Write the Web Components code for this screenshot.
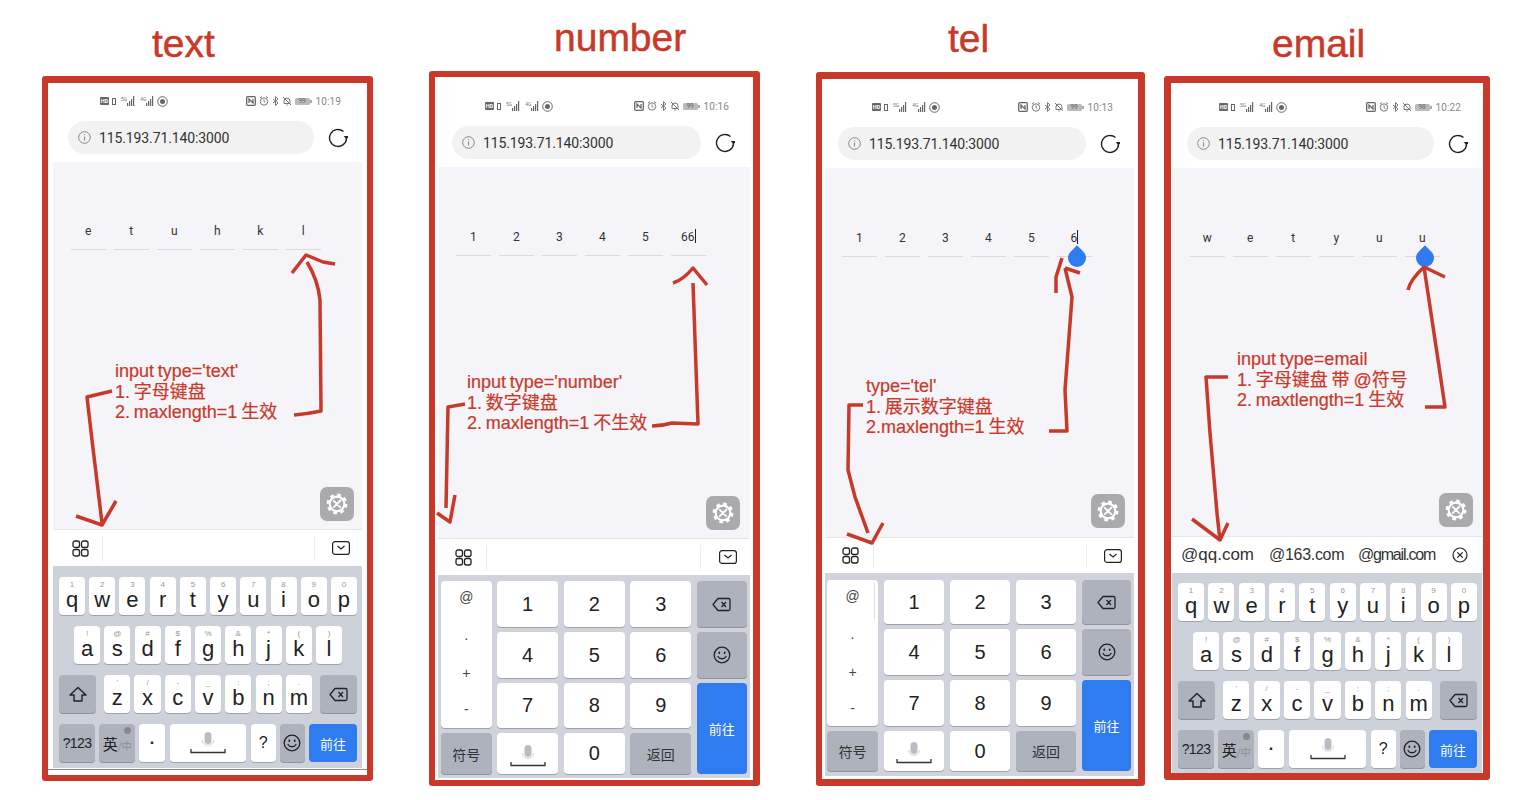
<!DOCTYPE html>
<html lang="zh">
<head>
<meta charset="utf-8">
<title>input type</title>
<style>
    html, body { margin: 0; background: #fff; }
    screenshot-board { --red: #c9392a; --sans: "Liberation Sans", "Noto Sans CJK SC", sans-serif; --ui: Roboto, "Noto Sans CJK SC", sans-serif; }
</style>
</head>
<body>
<screenshot-board>
    <board-title style="left:152px;top:22px">text</board-title>
    <board-title style="left:554px;top:16px">number</board-title>
    <board-title style="left:948px;top:17px">tel</board-title>
    <board-title style="left:1272px;top:22px">email</board-title>

    <phone-shot style="left:42px;top:76px;width:331px;height:705px;--bw:7px 6px 6px 6px;--inset:5px;--foot:7px;--foot-line:#8d8d8d;--head-top:8px;--url-x:15px;--url-w:246px">
        <phone-head time="10:19" battery="99"></phone-head>
        <phone-page style="--code-top:60px;--code-x:18px;--gear-r:8px;--gear-b:8px" values="e,t,u,h,k,l"></phone-page>
        <kb-toolbar></kb-toolbar>
        <letter-keyboard style="height:202px;--kb-top:11px"></letter-keyboard>
    </phone-shot>

    <phone-shot style="left:429px;top:71px;width:331px;height:715px;--bw:6px 7px 6px 6px;--inset:3px;--foot:2px;--head-top:19px;--url-x:14px;--url-w:249px">
        <phone-head time="10:16" battery="99"></phone-head>
        <phone-page style="--code-top:61px;--code-x:18px;--gear-r:10px;--gear-b:8px" values="1,2,3,4,5,66" caret></phone-page>
        <kb-toolbar style="--tool-l:49px;--tool-l-pad:3px;--tool-r:50px"></kb-toolbar>
        <number-keyboard style="height:203px;--kb-top:6px;--kb-x:3px;--kb-rows:46px 46px 45px 41px;--kb-cols:50.500px 61px 61px 61px 50px;--kb-gap:5.600px"></number-keyboard>
    </phone-shot>

    <phone-shot style="left:816px;top:72px;width:329px;height:714px;--bw:7px 7px 7px 6px;--inset:3px;--inset-r:4px;--foot:3px;--head-top:18px;--url-x:13px;--url-w:248px">
        <phone-head time="10:13" battery="99"></phone-head>
        <phone-page style="--code-top:61px;--code-x:17px;--gear-r:9px;--gear-b:9px" values="1,2,3,4,5,6" caret drop></phone-page>
        <kb-toolbar style="height:36px;--tool-l:49px;--tool-l-pad:3px"></kb-toolbar>
        <number-keyboard style="height:203px;--kb-top:7px;--kb-x:2px;--kb-rows:44px 46px 46px 40px;--kb-cols:51px 60px 60px 60px 49px;--kb-gap:6px" scrollbar></number-keyboard>
    </phone-shot>

    <phone-shot style="left:1164px;top:76px;width:326px;height:704px;--bw:7px 7px 7px 7px;--inset:1px;--foot:0px;--head-top:14px;--url-x:15px;--url-w:247px">
        <phone-head time="10:22" battery="98"></phone-head>
        <phone-page style="--code-top:61px;--code-x:18px;--gear-r:9px;--gear-b:9px" values="w,e,t,y,u,u" drop></phone-page>
        <mail-toolbar></mail-toolbar>
        <letter-keyboard style="height:200px;--kb-top:10px"></letter-keyboard>
    </phone-shot>

    <hand-arrows></hand-arrows>

    <hand-note style="left:115px;top:361px">input type='text'<br>1. 字母键盘<br>2. maxlength=1 生效</hand-note>
    <hand-note style="left:467px;top:372px">input type='number'<br>1. 数字键盘<br>2. maxlength=1 不生效</hand-note>
    <hand-note style="left:866px;top:376px">type='tel'<br>1. 展示数字键盘<br>2.maxlength=1 生效</hand-note>
    <hand-note style="left:1237px;top:349px">input type=email<br>1. 字母键盘 带 @符号<br>2. maxtlength=1 生效</hand-note>
</screenshot-board>

<script>
// Icons shared by the keyboards and bars
const ICONS = {
    backspace: `<svg width="19" height="15" viewBox="0 0 19 15" fill="none" stroke="#222" stroke-width="1.3" stroke-linejoin="round"><path d="M6 1.5h10.5a1.5 1.5 0 0 1 1.5 1.5v9a1.5 1.5 0 0 1-1.5 1.5H6L1 7.500z"/><path d="M9.500 5l4.500 5M14 5l-4.500 5"/></svg>`,
    shift: `<svg width="18" height="17" viewBox="0 0 18 17" fill="none" stroke="#222" stroke-width="1.4" stroke-linejoin="round"><path d="M9 1.500L17 9h-4v6H5V9H1z"/></svg>`,
    smile: `<svg width="18" height="18" viewBox="0 0 18 18" fill="none" stroke="#222" stroke-width="1.3" stroke-linecap="round"><circle cx="9" cy="9" r="7.800"/><path d="M5 10.500c1.500 3 6.500 3 8 0"/><path d="M6.300 6.500v.6M11.700 6.500v.6" stroke-width="1.800"/></svg>`,
    mic: `<svg width="36" height="22" viewBox="0 0 36 22" fill="none"><rect x="14.500" y="0" width="7" height="12" rx="3.500" fill="#b9bcc2"/><path d="M12.500 8c0 7 11 7 11 0" stroke="#cfd1d6"/><path d="M1 17v3.500h34V17" stroke="#333" stroke-width="1.300"/></svg>`,
    grid: `<svg width="17" height="17" viewBox="0 0 17 17" fill="none" stroke="#222" stroke-width="1.300"><rect x="1" y="1" width="6.500" height="6.500" rx="2"/><rect x="9.500" y="1" width="6.500" height="6.500" rx="2"/><rect x="1" y="9.500" width="6.500" height="6.500" rx="2"/><rect x="9.500" y="9.500" width="6.500" height="6.500" rx="2"/></svg>`,
    hide: `<svg width="18" height="14" viewBox="0 0 18 14" fill="none" stroke="#222" stroke-width="1.200"><rect x=".6" y=".6" width="16.800" height="12.800" rx="2.500"/><path d="M5.500 5l3.500 3 3.500-3"/></svg>`,
    close: `<svg width="16" height="16" viewBox="0 0 16 16" fill="none" stroke="#222" stroke-width="1.200"><circle cx="8" cy="8" r="7"/><path d="M5.300 5.300l5.400 5.400M10.700 5.300l-5.400 5.400"/></svg>`,
    info: `<svg width="13" height="13" viewBox="0 0 13 13" fill="none" stroke="#888" stroke-width="1"><circle cx="6.500" cy="6.500" r="5.800"/><path d="M6.500 5.500v4M6.500 3.300v1" stroke-width="1.100"/></svg>`,
    refresh: `<svg width="20" height="20" viewBox="0 0 20 20" fill="none" stroke="#222" stroke-width="1.400"><path d="M15.500 3.500A8.500 8.500 0 1 0 18.500 10.500"/><path d="M15.800 8h5l-2.400 3.500z" fill="#222" stroke="none"/></svg>`,
    gear: `<svg width="22" height="22" viewBox="0 0 24 24" fill="none" stroke="#fff"><circle cx="12" cy="12" r="8" stroke-width="2.400"/><circle cx="12" cy="12" r="10" stroke-width="2.800" stroke-dasharray="4 3.850"/><path d="M8.500 8.500l7 7M15.800 8.200l-7.300 7.300" stroke-width="2" stroke-linecap="round"/></svg>`
};

class ScreenshotBoard extends HTMLElement {
    constructor() {
        super();
        this.attachShadow({ mode: 'open' });
        this.shadowRoot.innerHTML = `
            <style>
                :host { display: block; position: relative; width: 1518px; height: 800px; overflow: hidden; background: #fff; }
            </style>
            <slot></slot>
        `;
    }
}

class BoardTitle extends HTMLElement {
    constructor() {
        super();
        this.attachShadow({ mode: 'open' });
        this.shadowRoot.innerHTML = `
            <style>
                :host { display: block; position: absolute; font: 39px/44px var(--sans); color: var(--red); -webkit-text-stroke: .5px var(--red); white-space: nowrap; }
            </style>
            <slot></slot>
        `;
    }
}

class HandNote extends HTMLElement {
    constructor() {
        super();
        this.attachShadow({ mode: 'open' });
        this.shadowRoot.innerHTML = `
            <style>
                :host { display: block; position: absolute; font: 18px/20.700px var(--sans); word-spacing: -1.200px; color: var(--red); -webkit-text-stroke: .2px var(--red); white-space: nowrap; }
            </style>
            <slot></slot>
        `;
    }
}

class PhoneShot extends HTMLElement {
    constructor() {
        super();
        this.attachShadow({ mode: 'open' });
        this.shadowRoot.innerHTML = `
            <style>
                :host {
                    display: flex;
                    flex-direction: column;
                    position: absolute;
                    box-sizing: border-box;
                    border: solid var(--red);
                    border-width: var(--bw);
                    border-radius: 3px;
                    padding: 0 var(--inset-r, var(--inset)) 0 var(--inset);
                    background: #fff;
                }
                .foot { flex: 0 0 var(--foot); position: relative; }
                .foot::before {
                    content: '';
                    position: absolute;
                    left: calc(0px - var(--inset));
                    right: calc(0px - var(--inset));
                    top: 1px;
                    height: 1px;
                    background: var(--foot-line, transparent);
                }
            </style>
            <slot></slot>
            <div class="foot"></div>
        `;
    }
}

class PhoneHead extends HTMLElement {
    constructor() {
        super();
        this.attachShadow({ mode: 'open' });
    }

    connectedCallback() {
        const bars = `<svg width="11" height="10" viewBox="0 0 11 10" fill="#666"><rect x="3" y="7" width="1.200" height="3"/><rect x="5" y="5" width="1.200" height="5"/><rect x="7" y="3" width="1.200" height="7"/><rect x="9" y="0" width="1.200" height="10"/></svg>`;
        this.shadowRoot.innerHTML = `
            <style>
                :host { display: block; flex: 0 0 auto; background: #fff; padding-top: var(--head-top); padding-bottom: 8px; font-family: var(--ui); }
                .status { display: flex; align-items: center; justify-content: space-between; height: 20px; padding: 0 21px 0 47px; color: #777; }
                .group { display: flex; align-items: center; gap: 3px; }
                .hd { background: #666; color: #fff; font: bold 5.500px/8px var(--ui); width: 9px; text-align: center; border-radius: 1px; }
                .net { display: flex; align-items: flex-start; font-size: 5px; line-height: 6px; margin-left: 2px; }
                .net svg { margin-left: -3px; }
                .batt { position: relative; width: 15px; height: 7px; background: #bbb; border-radius: 1.500px; font-size: 6.500px; line-height: 7px; text-align: center; color: #666; margin-right: 2px; }
                .batt::after { content: ''; position: absolute; right: -2px; top: 2px; width: 1.500px; height: 3px; background: #aaa; }
                .time { font-size: 10px; letter-spacing: .1px; color: #888; margin-left: 1px; }
                .url-row { display: flex; align-items: center; gap: 14px; height: 33px; margin-top: 10px; padding-left: var(--url-x); }
                .url { display: flex; align-items: center; gap: 8px; box-sizing: border-box; width: var(--url-w); height: 33px; padding-left: 10px; border-radius: 17px; background: #f2f2f2; font-size: 14px; letter-spacing: -.12px; color: #333; }
            </style>
            <div class="status">
                <div class="group">
                    <span class="hd">HD</span>
                    <svg width="4" height="7" viewBox="0 0 4 7"><rect x=".5" y=".5" width="3" height="6" fill="none" stroke="#666"/></svg>
                    <span class="net">5G${bars}</span>
                    <span class="net">4G${bars}</span>
                    <svg width="11" height="11" viewBox="0 0 11 11" fill="none" stroke="#666"><circle cx="5.500" cy="5.500" r="4.800"/><circle cx="5.500" cy="5.500" r="2.500" fill="#666" stroke="none"/></svg>
                </div>
                <div class="group">
                    <svg width="10" height="10" viewBox="0 0 10 10" fill="none" stroke="#666" stroke-width="1.300"><rect x=".7" y=".7" width="8.600" height="8.600" rx="1"/><path d="M3 7V3l4 4V3"/></svg>
                    <svg width="10" height="10" viewBox="0 0 10 10" fill="none" stroke="#777"><circle cx="5" cy="5.500" r="3.700"/><path d="M5 3.500v2l1.300 1M1 2l2-1.500M9 2L7 .5"/></svg>
                    <svg width="7" height="10" viewBox="0 0 7 10" fill="none" stroke="#777"><path d="M1 3l5 4-2.500 2.500v-9L6 3 1 7"/></svg>
                    <svg width="10" height="10" viewBox="0 0 10 10" fill="none" stroke="#777"><path d="M2 7.500V5a3 3 0 0 1 6 0v2.500zM4.300 9h1.400M1 1l8 8"/></svg>
                    <span class="batt">${this.getAttribute('battery')}</span>
                    <span class="time">${this.getAttribute('time')}</span>
                </div>
            </div>
            <div class="url-row">
                <div class="url">${ICONS.info}<span>115.193.71.140:3000</span></div>
                ${ICONS.refresh}
            </div>
        `;
    }
}

class PhonePage extends HTMLElement {
    constructor() {
        super();
        this.attachShadow({ mode: 'open' });
    }

    connectedCallback() {
        const values = this.getAttribute('values').split(',');
        const cells = values.map((v, i) => {
            const last = i === values.length - 1;
            const caret = last && this.hasAttribute('caret') ? '<i class="caret"></i>' : '';
            const drop = last && this.hasAttribute('drop') ? '<b class="drop"></b>' : '';
            return `<div class="cell"><span>${v}${caret}</span>${drop}</div>`;
        }).join('');
        this.shadowRoot.innerHTML = `
            <style>
                :host { display: block; position: relative; flex: 1 1 0; min-height: 0; background: #f4f4f9; padding: var(--code-top) 0 0 var(--code-x); font-family: var(--ui); }
                .code { display: grid; grid-template-columns: repeat(6, 34.500px); column-gap: 8.500px; }
                .cell { position: relative; height: 27px; border-bottom: 1px solid #d9d9df; text-align: center; font-size: 12px; line-height: 18px; color: #333; }
                .caret { display: inline-block; width: 1px; height: 14px; margin-left: 0; vertical-align: -2px; background: #222; }
                .drop { position: absolute; left: 11px; top: 20px; width: 18px; height: 18px; background: #2f7bf0; border-radius: 50% 0 50% 50%; transform: rotate(-45deg); }
                .fab { position: absolute; right: var(--gear-r); bottom: var(--gear-b); display: flex; align-items: center; justify-content: center; width: 34px; height: 34px; border-radius: 7px; background: #a9a9ae; }
            </style>
            <div class="code">${cells}</div>
            <div class="fab">${ICONS.gear}</div>
        `;
    }
}

class KbToolbar extends HTMLElement {
    constructor() {
        super();
        this.attachShadow({ mode: 'open' });
        this.shadowRoot.innerHTML = `
            <style>
                :host { display: flex; flex: 0 0 auto; box-sizing: border-box; height: 37px; border-top: 1px solid #e6e6ea; background: #fff; align-items: center; justify-content: space-between; }
                div { display: flex; align-items: center; justify-content: center; height: 25px; box-sizing: border-box; }
                .left { width: var(--tool-l, 50px); border-right: 1px solid #e8e8e8; padding-left: var(--tool-l-pad, 5px); }
                .right { width: var(--tool-r, 48px); border-left: 1px solid #efefef; padding-left: 4px; }
            </style>
            <div class="left">${ICONS.grid}</div>
            <div class="right">${ICONS.hide}</div>
        `;
    }
}

class MailToolbar extends HTMLElement {
    constructor() {
        super();
        this.attachShadow({ mode: 'open' });
        this.shadowRoot.innerHTML = `
            <style>
                :host { display: flex; flex: 0 0 auto; box-sizing: border-box; height: 37px; border-top: 1px solid #e6e6ea; background: #fff; align-items: center; padding-left: 9px; font: 17px var(--sans); color: #333; white-space: nowrap; }
                .qq { width: 88px; }
                .n163 { width: 89px; font-size: 16px; letter-spacing: -.3px; }
                .gmail { width: 94px; font-size: 16px; letter-spacing: -1.200px; }
            </style>
            <span class="qq">@qq.com</span><span class="n163">@163.com</span><span class="gmail">@gmail.com</span>${ICONS.close}
        `;
    }
}

class KeyCap extends HTMLElement {
    constructor() {
        super();
        this.attachShadow({ mode: 'open' });
    }

    connectedCallback() {
        const sup = this.getAttribute('sup');
        this.shadowRoot.innerHTML = `
            <style>
                :host { display: flex; flex-direction: column; align-items: center; justify-content: center; box-sizing: border-box; min-width: 0; position: relative; border-radius: 4px; background: #fff; box-shadow: 0 1px 0 #9ea3ae; color: #222; font: 20px var(--sans); }
                :host([kind="fn"]) { background: #adb2bd; box-shadow: 0 1px 0 #8f94a0; }
                :host([kind="go"]) { background: #2f7bf0; box-shadow: none; color: #fff; font-size: 13px; font-family: "Noto Sans CJK SC", sans-serif; }
                :host([sup]) { justify-content: flex-start; padding-top: 3px; font-size: 22px; }
                .sup { font: 8px/10px var(--sans); color: #999; }
                .label { line-height: 22px; margin-top: -1px; }
            </style>
            ${sup !== null
                ? `<span class="sup">${sup}</span><span class="label"><slot></slot></span>`
                : '<slot></slot>'}
        `;
    }
}

class LetterKeyboard extends HTMLElement {
    constructor() {
        super();
        this.attachShadow({ mode: 'open' });
    }

    connectedCallback() {
        const keys = (letters, sups) => [...letters].map((l, i) => `<key-cap sup="${sups[i]}">${l}</key-cap>`).join('');
        this.shadowRoot.innerHTML = `
            <style>
                :host { display: flex; flex: 0 0 auto; flex-direction: column; gap: 11px; box-sizing: border-box; padding: var(--kb-top) 5px 0 6px; background: #cdd1da; }
                .row { display: flex; gap: 4.200px; height: 38px; }
                .row key-cap { flex: 1 1 0; }
                .two { padding: 0 15px; }
                .three .mid { display: flex; flex: 1 1 0; gap: 4.200px; margin: 0 4px; }
                .three .mid key-cap { flex: 1 1 0; }
                .three > key-cap { flex: 0 0 37px; }
                .four key-cap { flex: 0 0 auto; }
                .four .space { flex: 1 1 0; justify-content: flex-end; padding-bottom: 8px; }
                .wide { width: 36px; }
                .dot { width: 26px; font-size: 16px; font-weight: bold; }
                .small { width: 25px; font-size: 16px; }
                .go { width: 48px; }
                .sym { font-size: 14px; letter-spacing: -.6px; }
                .globe { position: absolute; right: 4px; top: 3px; width: 7px; height: 7px; border-radius: 50%; background: #888; }
            </style>
            <div class="row">${keys('qwertyuiop', '1234567890')}</div>
            <div class="row two">${keys('asdfghjkl', '!@#$%&*()')}</div>
            <div class="row three">
                <key-cap kind="fn">${ICONS.shift}</key-cap>
                <div class="mid">${keys('zxcvbnm', "'/-_:;.")}</div>
                <key-cap kind="fn">${ICONS.backspace}</key-cap>
            </div>
            <div class="row four">
                <key-cap kind="fn" class="wide sym">?123</key-cap>
                <key-cap kind="fn" class="wide"><span style="font:15px 'Noto Sans CJK SC',sans-serif;white-space:nowrap">英<span style="font-size:10px;color:#8a8d94">/中</span></span><i class="globe"></i></key-cap>
                <key-cap class="dot">·</key-cap>
                <key-cap class="space">${ICONS.mic}</key-cap>
                <key-cap class="small">?</key-cap>
                <key-cap kind="fn" class="small">${ICONS.smile}</key-cap>
                <key-cap kind="go" class="go">前往</key-cap>
            </div>
        `;
    }
}

class NumberKeyboard extends HTMLElement {
    constructor() {
        super();
        this.attachShadow({ mode: 'open' });
    }

    connectedCallback() {
        const digit = (n) => `<key-cap class="num">${n}</key-cap>`;
        const bar = this.hasAttribute('scrollbar') ? '<i class="bar"></i>' : '';
        this.shadowRoot.innerHTML = `
            <style>
                :host { display: grid; flex: 0 0 auto; box-sizing: border-box; padding: var(--kb-top) 0 0 var(--kb-x); background: #d0d2dc; grid-template-columns: var(--kb-cols); grid-template-rows: var(--kb-rows); column-gap: var(--kb-gap); row-gap: 5px; align-content: start; }
                .side { grid-row: 1 / span 3; font-size: 14px; color: #444; justify-content: flex-start; }
                .side span { display: block; height: 16px; line-height: 16px; }
                .side .a { margin-top: 8px; }
                .side .b { margin-top: 22px; }
                .side .c { margin-top: 22px; }
                .side .d { margin-top: 20px; }
                .go { grid-column: 5; grid-row: 3 / span 2; }
                .lab { font: 14px "Noto Sans CJK SC", sans-serif; color: #333; }
                .bar { position: absolute; right: 3px; top: 3px; width: 1px; height: 36px; background: #ddd; }
                .voice { justify-content: flex-end; padding-bottom: 7px; }
            </style>
            <key-cap class="side"><span class="a">@</span><span class="b">.</span><span class="c">+</span><span class="d">-</span>${bar}</key-cap>
            ${digit(1)}${digit(2)}${digit(3)}
            <key-cap kind="fn">${ICONS.backspace}</key-cap>
            ${digit(4)}${digit(5)}${digit(6)}
            <key-cap kind="fn">${ICONS.smile}</key-cap>
            ${digit(7)}${digit(8)}${digit(9)}
            <key-cap kind="go" class="go">前往</key-cap>
            <key-cap kind="fn" class="lab">符号</key-cap>
            <key-cap class="voice">${ICONS.mic}</key-cap>
            ${digit(0)}
            <key-cap kind="fn" class="lab">返回</key-cap>
        `;
    }
}

// Hand drawn arrows, in board coordinates
class HandArrows extends HTMLElement {
    constructor() {
        super();
        this.attachShadow({ mode: 'open' });
        this.shadowRoot.innerHTML = `
            <style>
                :host { display: block; position: absolute; left: 0; top: 0; width: 1518px; height: 800px; pointer-events: none; }
                svg { display: block; }
                path { fill: none; stroke: var(--red); stroke-width: 3.500; stroke-linejoin: round; stroke-linecap: butt; }
            </style>
            <svg width="1518" height="800" viewBox="0 0 1518 800">
                <path d="M294 415Q307 414 321 411L320 300Q318 280 307 262"/>
                <path d="M292 273L306 255L323 262L335 264"/>
                <path d="M112 391L87 397L92 440L102 523"/>
                <path d="M76 516L102 525L116 501"/>

                <path d="M652 426Q662 426 672 423L698 424L693 283"/>
                <path d="M673 283Q683 280 693 268L707 285"/>
                <path d="M465 404L448 407L446 508"/>
                <path d="M437 513L450 522L455 495"/>

                <path d="M1049 431H1067L1065 390L1072 297L1065 268"/>
                <path d="M1056 293V277L1062 258M1065 268L1080 273"/>
                <path d="M863 405H849L848 470L855 497L868 533"/>
                <path d="M847 534L872 543L883 523"/>

                <path d="M1425 407H1445L1437 353L1424 267"/>
                <path d="M1408 290Q1410 280 1424 267L1445 277"/>
                <path d="M1228 377H1206L1210 433L1217 513L1220 541"/>
                <path d="M1192 519L1220 540L1228 523"/>
            </svg>
        `;
    }
}

customElements.define('screenshot-board', ScreenshotBoard);
customElements.define('board-title', BoardTitle);
customElements.define('hand-note', HandNote);
customElements.define('phone-shot', PhoneShot);
customElements.define('phone-head', PhoneHead);
customElements.define('phone-page', PhonePage);
customElements.define('kb-toolbar', KbToolbar);
customElements.define('mail-toolbar', MailToolbar);
customElements.define('key-cap', KeyCap);
customElements.define('letter-keyboard', LetterKeyboard);
customElements.define('number-keyboard', NumberKeyboard);
customElements.define('hand-arrows', HandArrows);
</script>
</body>
</html>
